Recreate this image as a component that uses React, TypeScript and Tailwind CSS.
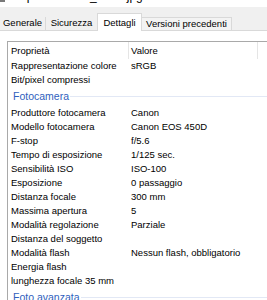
const font = { fontFamily: '"Liberation Sans", Arial, sans-serif' }

const before = [
  ['Rappresentazione colore', 'sRGB'],
  ['Bit/pixel compressi', ''],
]

const camera = [
  ['Produttore fotocamera', 'Canon'],
  ['Modello fotocamera', 'Canon EOS 450D'],
  ['F-stop', 'f/5.6'],
  ['Tempo di esposizione', '1/125 sec.'],
  ['Sensibilità ISO', 'ISO-100'],
  ['Esposizione', '0 passaggio'],
  ['Distanza focale', '300 mm'],
  ['Massima apertura', '5'],
  ['Modalità regolazione', 'Parziale'],
  ['Distanza del soggetto', ''],
  ['Modalità flash', 'Nessun flash, obbligatorio'],
  ['Energia flash', ''],
  ['lunghezza focale 35 mm', ''],
]

function Row({ name, value }: { name: string; value: string }) {
  return (
    <div className="flex h-[14px] whitespace-nowrap text-[9.5px] leading-[14px] text-black">
      <div className="w-[121px] shrink-0 pl-[3px]">{name}</div>
      <div className="pl-[2px]">{value}</div>
    </div>
  )
}

function Group({ title }: { title: string }) {
  return (
    <div className="flex h-[19px] items-center whitespace-nowrap pl-[5px]">
      <span className="text-[10.5px] leading-[19px] text-[#2f5fbd]">{title}</span>
      <div className="ml-[1px] h-px flex-1 bg-[#e2e8f5]" />
    </div>
  )
}

export default function App() {
  return (
    <div className="h-[300px] w-[267px] overflow-hidden bg-white" style={font}>
      {/* title bar, only its lower edge is in the picture */}
      <div className="flex h-[7px] overflow-hidden whitespace-nowrap">
        <div className="mt-[-11px] flex items-start">
          <div className="mt-[11px] h-[2px] w-[5px] bg-[#7a7a7a]" />
          <span className="ml-[3px] text-[12px] leading-[14px] text-black">Proprietà - IMG_0521.jpg</span>
        </div>
      </div>

      <div className="flex h-[24px] items-end border-b border-[#d9d9d9] bg-[#f0f0f0] text-[9.5px] text-black">
        <div className="flex h-[13px] w-[46px] items-center justify-center border-r border-[#d9d9d9]">Generale</div>
        <div className="flex h-[13px] w-[51px] items-center justify-center">Sicurezza</div>
        <div className="-mb-px flex h-[18px] w-[45px] items-start justify-center border-x border-t border-[#d9d9d9] bg-white pt-[2px]">
          Dettagli
        </div>
        <div className="flex h-[13px] w-[90px] items-center justify-center border-r border-t border-[#d9d9d9] bg-[#f3f3f3]">
          Versioni precedenti
        </div>
      </div>

      <div className="pl-[7px] pt-[10px]">
        <div className="border-l border-t border-[#a9a9a9]">
          <div className="flex h-[17px] whitespace-nowrap text-[9.5px] leading-[17px] text-black">
            <div className="w-[121px] shrink-0 border-r border-[#e5e5e5] pl-[3px]">Proprietà</div>
            <div className="w-[129px] shrink-0 border-r border-[#e5e5e5] pl-[2px]">Valore</div>
          </div>
          {before.map(([n, v]) => (
            <Row key={n} name={n} value={v} />
          ))}
          <Group title="Fotocamera" />
          {camera.map(([n, v]) => (
            <Row key={n} name={n} value={v} />
          ))}
          <Group title="Foto avanzata" />
        </div>
      </div>
    </div>
  )
}
